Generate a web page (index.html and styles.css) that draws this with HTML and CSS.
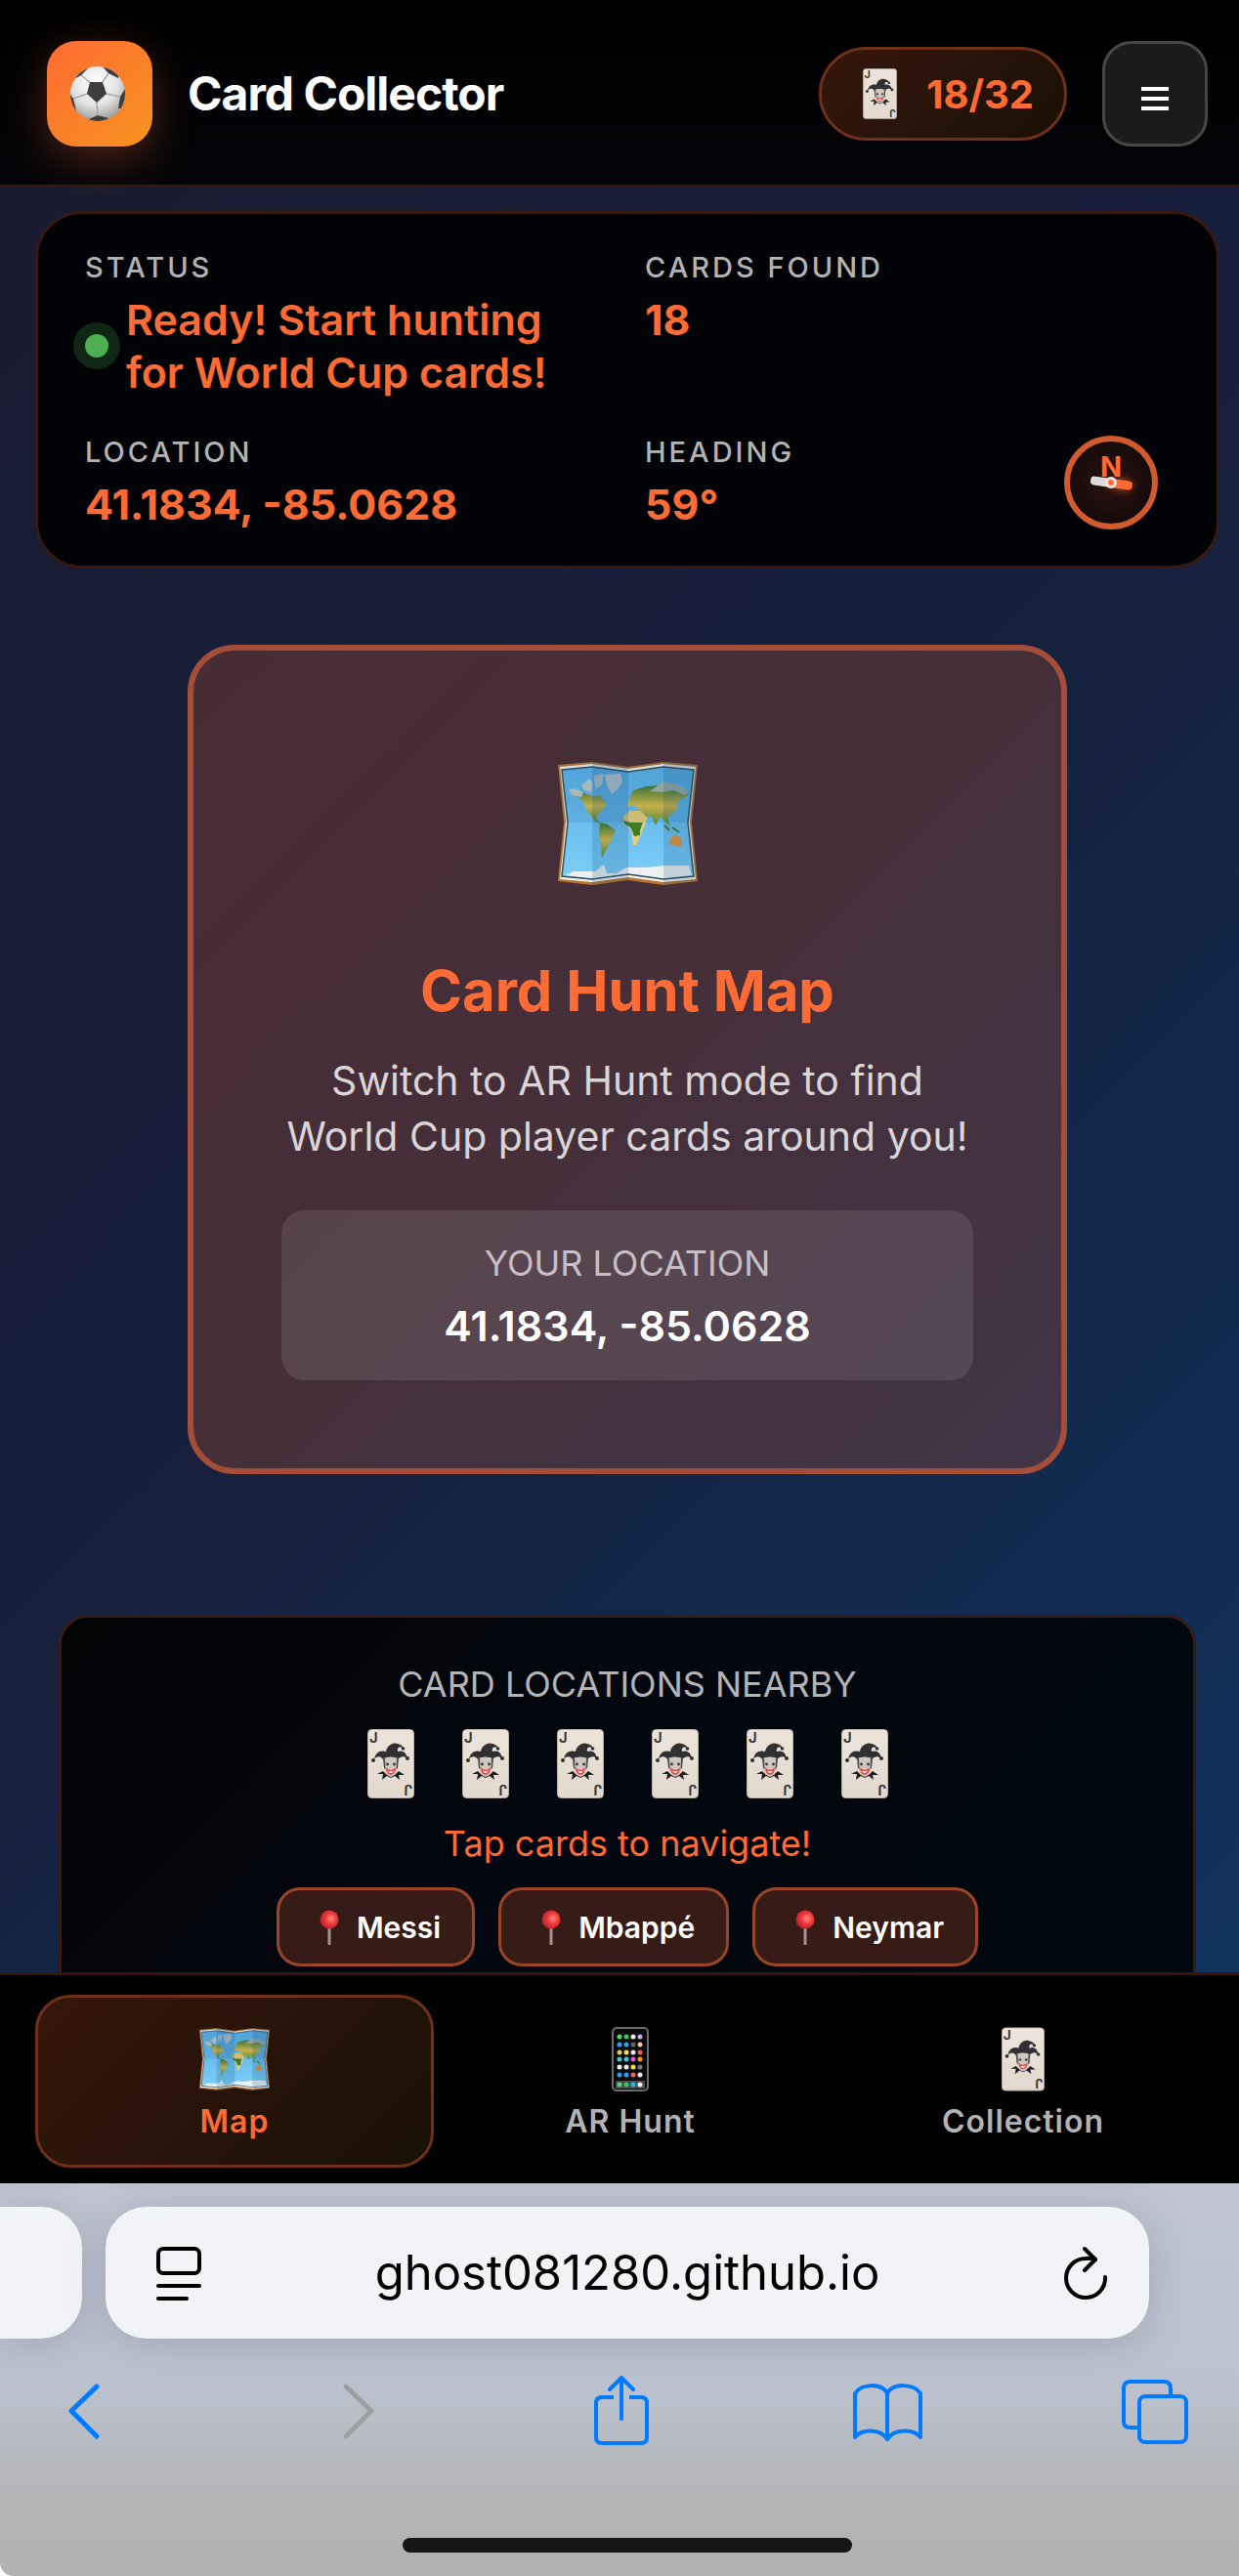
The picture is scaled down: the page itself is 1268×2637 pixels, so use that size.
FILE: index.html
```html
<!DOCTYPE html>
<html lang="en">
<head>
<meta charset="utf-8">
<meta name="viewport" content="width=device-width, initial-scale=1">
<title>Card Collector</title>
<link rel="stylesheet" href="styles.css">
</head>
<body>
<svg class="sprite" aria-hidden="true">
  <defs>
    <linearGradient id="paper" x1="0" y1="0" x2="0" y2="1"><stop offset="0" stop-color="#ece4da"/><stop offset="1" stop-color="#e2d8cd"/></linearGradient>
    <radialGradient id="pinhead" cx=".6" cy=".45" r=".6"><stop offset="0" stop-color="#ff8a80"/><stop offset=".5" stop-color="#ee3a3c"/><stop offset="1" stop-color="#b81e28"/></radialGradient>
    <radialGradient id="leather" cx=".45" cy=".3" r=".7"><stop offset="0" stop-color="#fff"/><stop offset=".6" stop-color="#e2e2e2"/><stop offset="1" stop-color="#9c9c9c"/></radialGradient>
    <linearGradient id="sea" x1="0" y1="0" x2="0" y2="1"><stop offset="0" stop-color="#5bb0e6"/><stop offset="1" stop-color="#7ccdf6"/></linearGradient>
    <linearGradient id="land" x1="0" y1="0" x2="0" y2="1"><stop offset="0" stop-color="#3c7a2c"/><stop offset=".5" stop-color="#e2bf45"/><stop offset="1" stop-color="#4f8a2b"/></linearGradient>
  </defs>
  <symbol id="worldmap" viewBox="0 0 143 126">
    <path d="M0 3L35 0L72 5L108 0L143 3L137 62L143 122L108 126L72 121L35 126L0 122L6 62Z" fill="#b8732c"/>
    <path d="M2 5L35 2L72 7L108 2L141 5L135 62L141 120L108 123L72 118L35 123L2 120L8 62Z" fill="#f6f4ee"/>
    <path d="M4 8L35 5L72 10L108 5L139 8L133 62L139 117L108 120L72 115L35 120L4 117L10 62Z" fill="url(#sea)" stroke="#334b57" stroke-width="1.500"/>
    <path d="M12 29L18 27L27 32L36 35L43 34L50 43L46 49L41 53L39 58L44 63L38 61L30 50L26 41L21 36L14 34Z" fill="url(#land)"/>
    <path d="M11 28L18 27L26 31L24 36L14 34ZM24 24L32 17L36 22L34 31L27 29ZM37 14L47 12L45 24L38 28Z" fill="#bcc7c8"/>
    <path d="M48 13L64 12L66 20L60 29L55 33L50 24Z" fill="#c6cdd2"/>
    <path d="M43 62L51 64L59 70L55 80L48 92L45 98L44 84L42 72Z" fill="url(#land)"/>
    <path d="M67 55L74 50L84 50L92 56L89 64L85 74L80 85L77 85L75 70L67 62Z" fill="#e9cf75"/>
    <path d="M67 60L74 62L87 62L84 70L84 75L78 76L75 68L68 63Z" fill="#3f7c25"/>
    <path d="M70 46L77 29L90 25L105 24L120 24L134 30L132 36L124 38L122 48L116 54L112 57L115 66L109 60L104 56L100 65L96 56L90 56L84 49L76 44Z" fill="url(#land)"/>
    <path d="M94 30L108 20L122 23L135 30L130 34L118 29L106 31Z" fill="#a9b2a6"/>
    <path d="M109 65L114 70M117 67L124 72" stroke="#3f7c25" stroke-width="2"/>
    <path d="M114 79L120 74L127 79L126 87L122 86L114 84Z" fill="#e79634"/>
    <path d="M7 116L16 112L38 112L47 105L50 114L60 114L70 108L90 108L110 106L134 106L137 116L108 119L72 114L35 119Z" fill="#eef0f0"/>
    <path d="M35 0L72 5V121L35 126ZM108 0L143 3L137 62L143 122L108 126Z" fill="#0d4a7c" opacity=".18"/>
    <path d="M6 62L0 3L35 0L72 5L108 0L143 3L137 62Z" fill="#0d4a7c" opacity=".12"/>
  </symbol>
  <symbol id="pin" viewBox="0 0 20 36">
    <path d="M10 16V35" stroke="#a3968f" stroke-width="3" stroke-linecap="round"/>
    <circle cx="10" cy="10" r="9.500" fill="url(#pinhead)"/>
  </symbol>
</svg>
<svg class="card-sprite" aria-hidden="true">
  <symbol id="joker" viewBox="0 0 48 71">
    <rect x=".5" y=".5" width="47" height="70" rx="4" fill="url(#paper)" stroke="#b9b0a6"/>
    <text x="2" y="14" class="pip">J</text>
    <text x="2" y="14" class="pip" transform="rotate(180 24 35.5)">J</text>
    <path d="M7 31C8 24 13 21 19 23C20 17 26 13 31 15C35 16 37 18 36 20C33 17 30 19 31 23C36 21 40 24 41 30C37 27 34 28 31 31C26 28 21 28 16 31C13 27 9 28 7 31Z" fill="#303032"/>
    <circle cx="6" cy="32" r="2" fill="#303032"/><circle cx="41" cy="30" r="2" fill="#303032"/><circle cx="36.500" cy="20" r="1.800" fill="#303032"/>
    <path d="M16 43L10 46L16 46L15 52L20 48L24 50L28 48L33 52L32 47L38 47L32 43L28 47H20Z" fill="#1d1d1f"/>
    <path d="M16 30Q24 27 32 30L31 40Q29 48 24 49Q19 48 17 40Z" fill="#cfc8bf"/>
    <path d="M16 30L18 29L18.500 41L17 40ZM32 30L30 29L29.500 41L31 40Z" fill="#4b4b4d"/>
    <circle cx="20.500" cy="36" r="1.400" fill="#29363d"/><circle cx="27.500" cy="36" r="1.400" fill="#29363d"/>
    <path d="M20 41Q24 44 28 41Q27 46 24 46Q21 46 20 41Z" fill="#fff" stroke="#e8433f" stroke-width="1.500"/>
  </symbol>
</svg>

<div class="app">
  <header class="topbar">
    <div class="logo">
      <svg width="58" height="58" viewBox="0 0 58 58" aria-hidden="true">
        <clipPath id="ball"><circle cx="29" cy="29" r="28"/></clipPath>
        <circle cx="29" cy="29" r="28" fill="url(#leather)"/>
        <g clip-path="url(#ball)">
          <path d="M21 17H34L38 29L28 38L18 29Z" fill="#3d3d3f"/>
          <path d="M12 10L22 0L14 2L5 14ZM33 0L52 6L50 13L40 8ZM58 22L52 32L50 44L58 44ZM0 28L4 34L7 46L0 44ZM20 55L29 51L40 54L36 59H23Z" fill="#3d3d3f"/>
          <path d="M21 17L12 10M34 17L40 8M38 29L52 32M28 38L29 51M18 29L4 34M50 44L40 54M7 46L20 55" stroke="#a8a8a8" stroke-width="1.500" fill="none"/>
        </g>
      </svg>
    </div>
    <h1 class="title">Card Collector</h1>
    <div class="score">
      <svg width="35" height="52" aria-hidden="true"><use href="#joker"/></svg>
      <span>18/32</span>
    </div>
    <button class="menu" type="button" aria-label="Menu">
      <svg width="30" height="26" viewBox="0 0 30 26"><path d="M1 3H29M1 13H29M1 23H29" stroke="#fff" stroke-width="4"/></svg>
    </button>
  </header>

  <main class="content">
    <section class="status">
      <div>
        <div class="label">Status</div>
        <div class="value state"><span class="dot"></span><span>Ready! Start hunting for World Cup cards!</span></div>
      </div>
      <div>
        <div class="label">Cards Found</div>
        <div class="value">18</div>
      </div>
      <div>
        <div class="label">Location</div>
        <div class="value">41.1834, -85.0628</div>
      </div>
      <div class="heading">
        <div>
          <div class="label">Heading</div>
          <div class="value">59°</div>
        </div>
        <svg class="compass" width="96" height="96" viewBox="0 0 96 96" aria-hidden="true">
          <defs>
            <radialGradient id="dial"><stop offset="0" stop-color="#2b1310"/><stop offset="1" stop-color="#150a0b"/></radialGradient>
            <filter id="glow" x="-1" y="-2" width="3" height="5"><feGaussianBlur stdDeviation="4"/></filter>
          </defs>
          <circle cx="48" cy="48" r="45" fill="url(#dial)" stroke="#d15a2e" stroke-width="6"/>
          <text x="48" y="42" class="north">N</text>
          <g transform="rotate(8 48 48)">
            <rect x="48" y="44" width="21" height="9" rx="4" fill="#ff6b35" filter="url(#glow)" opacity=".7"/>
            <rect x="48" y="44" width="22" height="9" rx="4" fill="#ff6b35"/>
            <rect x="27" y="44" width="22" height="9" rx="4" fill="#dcdcdc"/>
          </g>
          <circle cx="48" cy="48" r="4.500" fill="#ff6b35" stroke="#f6e5df" stroke-width="3"/>
        </svg>
      </div>
    </section>

    <section class="hunt">
      <svg class="hunt-map" width="143" height="126" aria-hidden="true"><use href="#worldmap"/></svg>
      <h2>Card Hunt Map</h2>
      <p>Switch to AR Hunt mode to find World Cup player cards around you!</p>
      <div class="place">
        <div class="place-label">YOUR LOCATION</div>
        <div class="place-value">41.1834, -85.0628</div>
      </div>
    </section>

    <section class="nearby">
      <div class="nearby-label">CARD LOCATIONS NEARBY</div>
      <div class="cards">
        <svg width="48" height="71"><use href="#joker"/></svg>
        <svg width="48" height="71"><use href="#joker"/></svg>
        <svg width="48" height="71"><use href="#joker"/></svg>
        <svg width="48" height="71"><use href="#joker"/></svg>
        <svg width="48" height="71"><use href="#joker"/></svg>
        <svg width="48" height="71"><use href="#joker"/></svg>
      </div>
      <div class="hint">Tap cards to navigate!</div>
      <div class="players">
        <button type="button"><svg width="20" height="36" aria-hidden="true"><use href="#pin"/></svg>Messi</button>
        <button type="button"><svg width="20" height="36" aria-hidden="true"><use href="#pin"/></svg>Mbappé</button>
        <button type="button"><svg width="20" height="36" aria-hidden="true"><use href="#pin"/></svg>Neymar</button>
      </div>
    </section>
  </main>

  <nav class="tabs">
    <button type="button" class="tab active"><svg width="72" height="66" aria-hidden="true"><use href="#worldmap"/></svg>Map</button>
    <button type="button" class="tab">
      <svg width="38" height="66" viewBox="0 0 38 66" aria-hidden="true">
        <rect x="1" y="1" width="36" height="64" rx="4" fill="#0a0a0a" stroke="#6c6c6e" stroke-width="2"/>
        <g stroke-width="5" stroke-linecap="round" stroke-dasharray="0 7">
          <path d="M8 10H9" stroke="#4cd964"/><path d="M15 10H16" stroke="#35c759"/><path d="M22 10H23" stroke="#e8e8e8"/><path d="M29 10H30" stroke="#d9a6e8"/>
          <path d="M8 18H9" stroke="#1fa2ef"/><path d="M15 18H16" stroke="#1fa2ef"/><path d="M22 18H23" stroke="#666"/><path d="M29 18H30" stroke="#f0c9a0"/>
          <path d="M8 26H9" stroke="#e3c84d"/><path d="M15 26H16" stroke="#f4e04d"/><path d="M22 26H23" stroke="#e8e8e8"/><path d="M29 26H30" stroke="#f0605a"/>
          <path d="M8 33H9" stroke="#43c6d6"/><path d="M15 33H16" stroke="#43c6d6"/><path d="M22 33H23" stroke="#d65be0"/><path d="M29 33H30" stroke="#ff9500"/>
          <path d="M8 41H9" stroke="#f2f2f2"/><path d="M15 41H16" stroke="#e8e8e8"/><path d="M22 41H23" stroke="#f2df4a"/><path d="M29 41H30" stroke="#777"/>
          <path d="M8 49H9" stroke="#1fa2ef"/><path d="M15 49H16" stroke="#1fa2ef"/><path d="M22 49H23" stroke="#f0605a"/><path d="M29 49H30" stroke="#e8e8e8"/>
        </g>
        <rect x="4" y="55" width="30" height="8" fill="#4a4a4c"/>
        <circle cx="8" cy="59" r="2.500" fill="#4cd964"/><circle cx="15" cy="59" r="2.500" fill="#35c759"/><circle cx="22" cy="59" r="2.500" fill="#1fb2ef"/><circle cx="29" cy="59" r="2.500" fill="#f2f2f2"/>
      </svg>AR Hunt</button>
    <button type="button" class="tab"><svg width="44" height="66" aria-hidden="true"><use href="#joker"/></svg>Collection</button>
  </nav>
</div>

<footer class="browser">
  <div class="address-row">
    <div class="prev-tab"></div>
    <div class="address">
      <button type="button" aria-label="Page settings">
        <svg width="46" height="56" viewBox="0 0 46 56"><g fill="none" stroke="#000" stroke-width="4" stroke-linecap="round"><rect x="2" y="3" width="42" height="25" rx="5"/><path d="M2 41H44M2 54H31"/></g></svg>
      </button>
      <input type="text" value="ghost081280.github.io" aria-label="Address">
      <button type="button" aria-label="Reload">
        <svg width="46" height="56" viewBox="0 0 46 56"><g fill="none" stroke="#000" stroke-width="4" stroke-linecap="round" stroke-linejoin="round"><path d="M43 32A20 20 0 1 1 23 13C27 12 30 13 33 14"/><path d="M22 3L33 14L22 25"/></g></svg>
      </button>
    </div>
  </div>
  <div class="toolbar">
    <button type="button" aria-label="Back"><svg width="72" height="72" viewBox="0 0 72 72"><path d="M49 11L23 36L49 62" stroke-width="5"/></svg></button>
    <button type="button" aria-label="Forward" class="off"><svg width="72" height="72" viewBox="0 0 72 72"><path d="M30 11L56 36L30 62" stroke-width="5"/></svg></button>
    <button type="button" aria-label="Share"><svg width="72" height="72" viewBox="0 0 72 72"><path d="M30 22H18Q12 22 12 28V63Q12 69 18 69H58Q64 69 64 63V28Q64 22 58 22H46" stroke-linecap="butt"/><path d="M38 44V3M26 14L38 2L50 14"/></svg></button>
    <button type="button" aria-label="Bookmarks"><svg width="72" height="72" viewBox="0 0 72 72"><path d="M37 18C31 7 11 8 4 18V63C11 54 30 54 37 65C44 54 64 54 71 63V18C64 8 43 7 37 18V65" transform="translate(-1 0)"/></svg></button>
    <button type="button" aria-label="Tabs"><svg width="72" height="72" viewBox="0 0 72 72"><path d="M18 53H11Q4 53 4 47V13Q4 6 11 6H45Q52 6 52 13V20" stroke-linecap="butt"/><rect x="20" y="21" width="48" height="47" rx="6"/></svg></button>
  </div>
  <div class="home-bar"></div>
</footer>
</body>
</html>
```

FILE: styles.css
```css
* { box-sizing: border-box; }

body {
  margin: 0;
  background: #fff;
  color: #fff;
  font-family: Inter, "Liberation Sans", sans-serif;
}

h1, h2, p { margin: 0; }

button {
  margin: 0;
  padding: 0;
  border: 0;
  background: none;
  color: inherit;
  font: inherit;
}

svg { display: block; flex: none; }

.sprite { position: absolute; width: 0; height: 0; }

.card-sprite { display: none; }

.pip { font-size: 15px; font-weight: 600; fill: #303032; }

.app { background: linear-gradient(135deg, #1a1a2e 0%, #16213e 50%, #0f3460 100%); }

/* Top bar */
.topbar {
  display: flex;
  align-items: center;
  gap: 36px;
  padding: 42px 32px 39px 48px;
  border-bottom: 3px solid #35160e;
  background: linear-gradient(#000, #040509);
}

.logo {
  display: flex;
  align-items: center;
  justify-content: center;
  width: 108px;
  height: 108px;
  padding-right: 4px;
  border-radius: 30px;
  background: linear-gradient(135deg, #ff6b35, #f7931e);
  box-shadow: 0 12px 45px rgba(255, 107, 53, 0.3);
}

.title {
  flex: 1;
  font-size: 48px;
  line-height: 60px;
  font-weight: 700;
  letter-spacing: -1px;
}

.score {
  display: flex;
  align-items: center;
  gap: 30px;
  height: 96px;
  padding: 0 31px 0 42px;
  border: 3px solid #6f2f19;
  border-radius: 48px;
  background: linear-gradient(135deg, #36170c, #191005);
  color: #ff6b35;
  font-size: 40px;
  font-weight: 700;
}

.menu {
  display: flex;
  align-items: center;
  justify-content: center;
  width: 108px;
  height: 108px;
  padding-top: 10px;
  border: 3px solid #474747;
  border-radius: 30px;
  background: #1b1b1b;
}

.content { padding-top: 24px; }

/* Status panel */
.status {
  display: grid;
  grid-template-columns: 1fr 1fr;
  gap: 36px;
  margin: 0 20px 0 36px;
  padding: 36px 48px;
  border: 3px solid #371812;
  border-radius: 48px;
  background: #020307;
}

.label {
  margin-bottom: 7px;
  color: #b3b3b4;
  font-size: 29px;
  line-height: 38px;
  font-weight: 500;
  letter-spacing: 3px;
  text-transform: uppercase;
}

.value {
  color: #ff6b35;
  font-size: 43px;
  line-height: 54px;
  font-weight: 700;
}

.state {
  display: flex;
  align-items: center;
  gap: 18px;
  padding-right: 36px;
  font-weight: 600;
}

.dot {
  flex: none;
  width: 24px;
  height: 24px;
  border-radius: 50%;
  background: #4caf50;
  box-shadow: 0 0 0 12px #112716;
}

.heading {
  display: flex;
  align-items: center;
  justify-content: space-between;
  padding-right: 12px;
}

.north {
  fill: #ff6b35;
  font-size: 29px;
  font-weight: 700;
  text-anchor: middle;
}

/* Map card */
.hunt {
  display: flex;
  flex-direction: column;
  align-items: center;
  margin: 78px 176px 144px 192px;
  padding: 90px;
  border: 6px solid #a44d38;
  border-radius: 48px;
  background: linear-gradient(135deg, #472c33, #452f39 50%, #423548);
  text-align: center;
}

.hunt-map { margin: 24px 0 72px; }

.hunt h2 {
  margin-bottom: 28px;
  color: #ff6b35;
  font-size: 58px;
  line-height: 72px;
  font-weight: 700;
}

.hunt p {
  margin-bottom: 47px;
  color: #dad5d7;
  font-size: 41px;
  line-height: 57px;
}

.place {
  align-self: stretch;
  padding: 29px;
  border-radius: 24px;
  background: rgba(255, 255, 255, 0.1);
}

.place-label {
  margin-bottom: 12px;
  color: #c6bfc5;
  font-size: 36px;
  line-height: 50px;
}

.place-value {
  font-size: 43px;
  line-height: 54px;
  font-weight: 600;
}

/* Nearby panel */
.nearby {
  display: flex;
  flex-direction: column;
  align-items: center;
  margin: 0 44px 0 60px;
  padding: 44px 0 6px;
  border: 3px solid #371b16;
  border-bottom: 0;
  border-radius: 30px 30px 0 0;
  background: linear-gradient(135deg, #030406, #03060e 40%, #01090f);
}

.nearby-label {
  color: #b3b4b6;
  font-size: 36px;
  line-height: 48px;
}

.cards {
  display: flex;
  gap: 49px;
  margin: 22px 0;
}

.hint {
  margin-bottom: 21px;
  color: #ff6b35;
  font-size: 36px;
  line-height: 48px;
}

.players { display: flex; gap: 24px; }

.players button {
  display: flex;
  align-items: center;
  gap: 18px;
  height: 81px;
  padding: 0 32px 0 41px;
  border: 3px solid #9a4527;
  border-radius: 24px;
  background: #361b17;
  color: #fff;
  font-size: 30px;
  font-weight: 600;
}

/* Bottom tabs */
.tabs {
  display: flex;
  padding: 20px 20px 16px 36px;
  border-top: 3px solid #35160e;
  background: #000;
}

.tab {
  display: flex;
  flex: 1 1 0;
  flex-direction: column;
  align-items: center;
  justify-content: center;
  gap: 7px;
  min-height: 177px;
  padding-top: 10px;
  color: #b3b3b3;
  font-size: 32px;
  line-height: 48px;
  font-weight: 600;
  letter-spacing: 1px;
}

.tab.active {
  border: 3px solid #6f2f19;
  border-radius: 36px;
  background: linear-gradient(135deg, #36170c, #191005);
  color: #ff6b35;
}

/* Browser chrome */
.browser {
  padding: 24px 0;
  border-bottom-left-radius: 14px;
  background: linear-gradient(#c0c4d1, #bbc2cf 50%, #b3b4b6 80%, #b1b1b1);
}

.address-row {
  display: grid;
  grid-template-columns: 84px 1fr 68px;
  gap: 24px;
}

.prev-tab, .address {
  height: 135px;
  background: #f2f3f6;
  box-shadow: 0 6px 42px rgba(70, 75, 95, 0.22);
}

.prev-tab { border-radius: 0 42px 42px 0; }

.address {
  display: grid;
  grid-template-columns: 150px 1fr 150px;
  align-items: center;
  border-radius: 42px;
}

.address button { display: flex; justify-content: center; }

.address button:last-child { padding-left: 20px; }

.address input {
  width: 100%;
  padding: 0;
  border: 0;
  background: none;
  color: #000;
  font-family: inherit;
  font-size: 49px;
  line-height: 72px;
  text-align: center;
}

.toolbar {
  display: flex;
  justify-content: space-between;
  margin-top: 38px;
  padding: 0 50px;
}

.toolbar svg {
  fill: none;
  stroke: #007aff;
  stroke-width: 4;
  stroke-linecap: round;
  stroke-linejoin: round;
}

.toolbar .off svg { stroke: #9d9ea1; }

.home-bar {
  width: 460px;
  height: 15px;
  margin: 94px auto 0 412px;
  border-radius: 8px;
  background: #161616;
}
```
